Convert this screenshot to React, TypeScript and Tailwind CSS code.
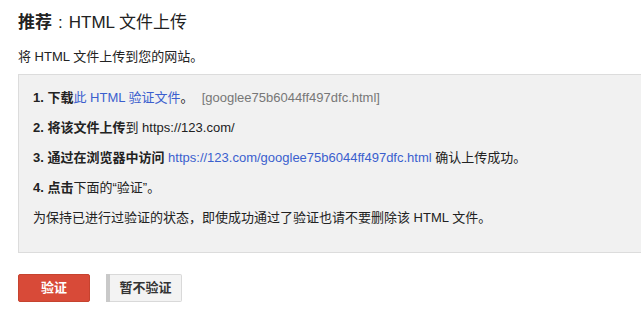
export default function App() {
    const font = { fontFamily: '"Liberation Sans", Arial, "Noto Sans CJK SC", sans-serif' };

    return (
        <div className="w-[641px] h-[325px] bg-white text-[13px] text-[#222] overflow-hidden" style={font}>
            <h1 className="pl-[18px] pt-[12px] text-[17px] leading-[22px] font-normal text-[#222]">
                <span className="font-bold">推荐</span>
                <span className="px-[6px]">:</span>HTML 文件上传
            </h1>
            <p className="pl-[18px] mt-[14px] leading-[18px]">将 HTML 文件上传到您的网站。</p>
            <div className="ml-[18px] mt-[8px] h-[179px] bg-[#f1f1f1] border border-r-0 border-[#dcdcdc] pl-[14px] pt-[14px] flex flex-col gap-[12px] leading-[18px]">
                <div>
                    <span className="font-bold">1. 下载</span>
                    <a className="text-[#3b5fce]">此 HTML 验证文件</a>。
                    <span className="ml-[8px] text-[#777]">[googlee75b6044ff497dfc.html]</span>
                </div>
                <div>
                    <span className="font-bold">2. 将该文件上传</span>到 https://123.com/
                </div>
                <div>
                    <span className="font-bold">3. 通过在浏览器中访问</span>{" "}
                    <a className="text-[#3b5fce]">https://123.com/googlee75b6044ff497dfc.html</a> 确认上传成功。
                </div>
                <div>
                    <span className="font-bold">4. 点击</span>下面的“验证”。
                </div>
                <div>为保持已进行过验证的状态，即使成功通过了验证也请不要删除该 HTML 文件。</div>
            </div>
            <div className="pl-[18px] mt-[21px] flex items-center gap-[16px]">
                <button className="w-[72px] h-[28px] rounded-[2px] bg-[#d84a38] border border-[#c6432f] text-white font-bold text-[13px]">
                    验证
                </button>
                <div className="flex h-[28px]">
                    <div className="w-[4px] bg-[#c9c9c9]" />
                    <button className="w-[72px] h-[28px] rounded-r-[2px] bg-[#f3f3f3] border border-l-0 border-[#d9d9d9] text-[#333] font-bold text-[13px]">
                        暂不验证
                    </button>
                </div>
            </div>
        </div>
    );
}
